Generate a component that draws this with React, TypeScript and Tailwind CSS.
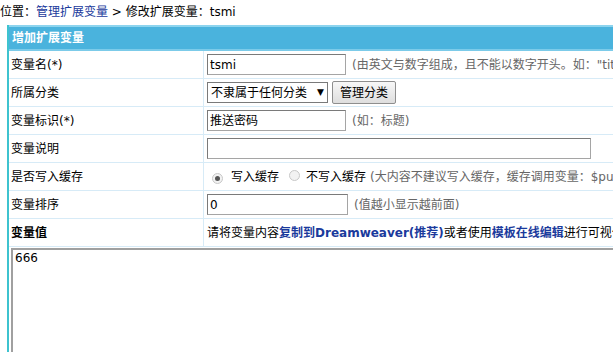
const font = "font-['Verdana','DejaVu_Sans','Noto_Sans_CJK_SC',sans-serif]";

function Row({ label, bold, children }: { label: string; bold?: boolean; children: React.ReactNode }) {
  return (
    <div className="flex h-[28px] border-b border-[#d7ebf7]">
      <div className={`w-[195px] shrink-0 border-r border-[#d7ebf7] pl-[2px] flex items-center text-[12px] text-black ${bold ? 'font-bold' : ''}`}>
        {label}
      </div>
      <div className="flex-1 flex items-center pl-[3px] text-[12px] text-black whitespace-nowrap">{children}</div>
    </div>
  );
}

function Hint({ children }: { children: React.ReactNode }) {
  return <span className="ml-[6px] text-[12px] text-[#666]">{children}</span>;
}

function Radio({ checked }: { checked?: boolean }) {
  return (
    <span className="inline-flex w-[11px] h-[11px] rounded-full border border-[#c8c8c8] bg-[#f2f2f2] items-center justify-center">
      {checked && <span className="w-[5px] h-[5px] rounded-full bg-[#555]" />}
    </span>
  );
}

export default function App() {
  return (
    <div className={`w-[613px] h-[352px] overflow-hidden bg-white ${font}`}>
      <div className="h-[24px] flex items-center text-[12px] text-black whitespace-nowrap">
        位置：<span className="text-[#1a3a9c]">管理扩展变量</span>&nbsp;&gt;&nbsp;修改扩展变量：tsmi
      </div>
      <div className="ml-[7px] w-[900px] border-l-2 border-[#3ec3cf] mt-[1px]">
        <div className="h-[26px] bg-[#4ab3dd] border-t-2 border-[#8dd4ee] border-b-2 border-b-[#7ccbe9] flex items-center pl-[3px] text-white font-bold text-[12px]">
          增加扩展变量
        </div>
        <Row label="变量名(*)">
          <div className="w-[139px] h-[21px] border border-[#a5a5a5] border-t-[#7a7a7a] border-l-[#7a7a7a] flex items-center px-[2px]">tsmi</div>
          <Hint>(由英文与数字组成，且不能以数字开头。如："title")</Hint>
        </Row>
        <Row label="所属分类">
          <div className="w-[121px] h-[21px] border border-[#7a7a7a] flex items-center justify-between px-[3px]">
            <span>不隶属于任何分类</span>
            <span className="text-[9px]">▼</span>
          </div>
          <div className="ml-[4px] w-[64px] h-[23px] border border-[#8e8e8e] rounded-[2px] bg-gradient-to-b from-[#f7f7f7] to-[#dedede] flex items-center justify-center">管理分类</div>
        </Row>
        <Row label="变量标识(*)">
          <div className="w-[139px] h-[21px] border border-[#a5a5a5] border-t-[#7a7a7a] border-l-[#7a7a7a] flex items-center px-[2px]">推送密码</div>
          <Hint>(如：标题)</Hint>
        </Row>
        <Row label="变量说明">
          <div className="w-[384px] h-[21px] border border-[#a5a5a5] border-t-[#7a7a7a] border-l-[#7a7a7a]" />
        </Row>
        <Row label="是否写入缓存">
          <span className="ml-[5px]"><Radio checked /></span>
          <span className="ml-[8px]">写入缓存</span>
          <span className="ml-[10px]"><Radio /></span>
          <span className="ml-[6px]">不写入缓存</span>
          <span className="ml-[4px] text-[#666]">(大内容不建议写入缓存，缓存调用变量：$public_var)</span>
        </Row>
        <Row label="变量排序">
          <div className="w-[141px] h-[21px] border border-[#a5a5a5] border-t-[#7a7a7a] border-l-[#7a7a7a] flex items-center px-[2px]">0</div>
          <Hint>(值越小显示越前面)</Hint>
        </Row>
        <Row label="变量值" bold>
          请将变量内容<span className="text-[#1a3a9c] font-bold">复制到Dreamweaver(推荐)</span>或者使用<span className="text-[#1a3a9c] font-bold">模板在线编辑</span>进行可视化编辑
        </Row>
        <div className="pt-[1px] pl-[2px]">
          <div className="h-[120px] border-2 border-[#a0a0a0] border-r-0 border-b-0 px-[2px] text-[12px] leading-[16px] text-black">666</div>
        </div>
      </div>
    </div>
  );
}
